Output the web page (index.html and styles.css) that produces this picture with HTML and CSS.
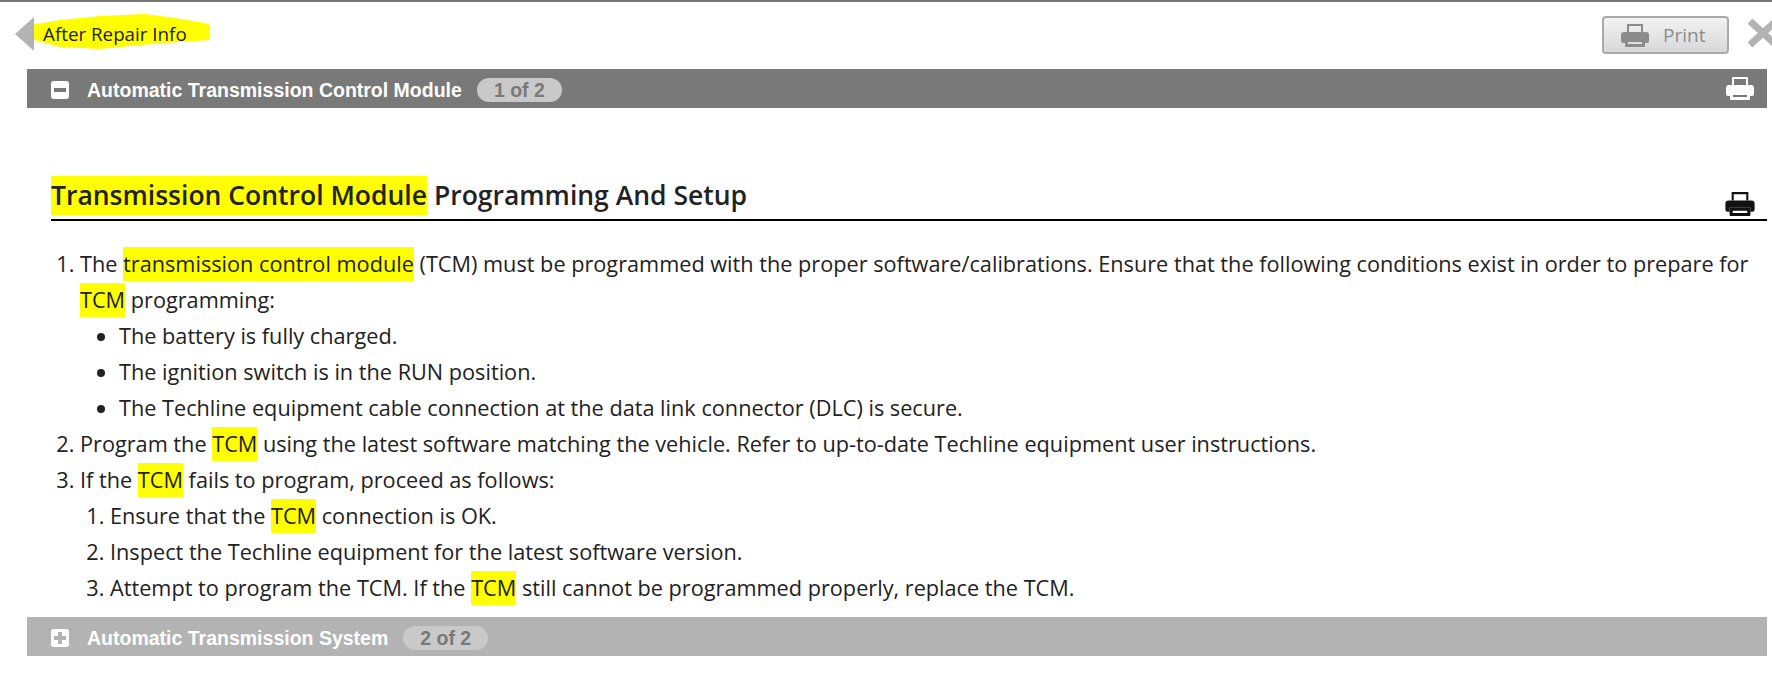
FILE: index.html
```html
<!DOCTYPE html>
<html lang="en">
<head>
  <meta charset="UTF-8">
  <title>After Repair Info</title>
  <link rel="stylesheet" href="styles.css">
</head>
<body>
  <svg width="0" height="0" class="defs">
    <symbol id="printer" viewBox="0 0 28 24">
      <path d="M6 9V1h16v8h-2V3H8v6z"/>
      <path d="M3 9h22a3 3 0 0 1 3 3v6a2 2 0 0 1-2 2h-2v-4H4v4H2a2 2 0 0 1-2-2v-6a3 3 0 0 1 3-3z"/>
      <path d="M4 16h20v7a1 1 0 0 1-1 1H5a1 1 0 0 1-1-1zM7 19v2h14v-2z" fill-rule="evenodd"/>
    </symbol>
  </svg>

  <header class="top-bar">
    <div class="back-link">
      <svg class="scribble" width="180" height="35" viewBox="0 0 180 35">
        <path d="M0 11 L30 6 L70 2 L115 0 L145 4 L175 9 L180 11 L180 26 L150 28 L110 31 L70 35 L30 33 L4 26 Z"/>
      </svg>
      <span class="back-arrow"></span>
      <span class="back-text">After Repair Info</span>
    </div>
    <div class="top-actions">
      <button class="print-btn">
        <svg class="print-icon"><use href="#printer"/></svg>
        Print
      </button>
      <svg class="close-x" width="24" height="32" viewBox="0 0 24 32">
        <path d="M2 4 L28 28 M28 4 L2 28"/>
      </svg>
    </div>
  </header>

  <div class="bar bar-open">
    <span class="toggle"><span class="minus"></span></span>
    <span class="bar-title">Automatic Transmission Control Module</span>
    <span class="pill">1 of 2</span>
    <svg class="bar-print"><use href="#printer"/></svg>
  </div>

  <section class="doc">
    <div class="doc-head">
      <h1><mark>Transmission Control Module</mark> Programming And Setup</h1>
      <svg class="doc-print"><use href="#printer"/></svg>
    </div>

    <ol class="steps">
      <li>The <mark>transmission control module</mark> (TCM) must be programmed with the proper software/calibrations. Ensure that the following conditions exist in order to prepare for <mark>TCM</mark> programming:
        <ul>
          <li>The battery is fully charged.</li>
          <li>The ignition switch is in the RUN position.</li>
          <li>The Techline equipment cable connection at the data link connector (DLC) is secure.</li>
        </ul>
      </li>
      <li>Program the <mark>TCM</mark> using the latest software matching the vehicle. Refer to up-to-date Techline equipment user instructions.</li>
      <li>If the <mark>TCM</mark> fails to program, proceed as follows:
        <ol>
          <li>Ensure that the <mark>TCM</mark> connection is OK.</li>
          <li>Inspect the Techline equipment for the latest software version.</li>
          <li>Attempt to program the TCM. If the <mark>TCM</mark> still cannot be programmed properly, replace the TCM.</li>
        </ol>
      </li>
    </ol>
  </section>

  <div class="bar bar-closed">
    <span class="toggle"><span class="plus"></span></span>
    <span class="bar-title">Automatic Transmission System</span>
    <span class="pill">2 of 2</span>
  </div>
</body>
</html>
```

FILE: styles.css
```css
html, body {
  overflow: hidden;
}

body {
  margin: 0;
  padding: 0;
  height: 692px;
  box-sizing: border-box;
  border-top: 2px solid #777;
  background: #fff;
  color: #222;
  font-family: 'Open Sans', 'Noto Sans', sans-serif;
}

.defs {
  display: block;
  height: 0;
}

.top-bar {
  display: flex;
  justify-content: space-between;
  height: 67px;
  padding-left: 15px;
}

.back-link {
  position: relative;
  display: flex;
  align-items: center;
  height: 34px;
  margin-top: 15px;
}

.scribble {
  position: absolute;
  left: 15px;
  top: -3px;
}

.scribble path {
  fill: #ffff00;
}

.back-arrow {
  position: relative;
  width: 0;
  height: 0;
  border-top: 17px solid transparent;
  border-bottom: 17px solid transparent;
  border-right: 19px solid #b3b3b3;
  margin-right: 9px;
}

.back-text {
  position: relative;
  font-size: 18.8px;
  color: #222;
}

.top-actions {
  display: flex;
  align-items: flex-start;
  gap: 19px;
}

.print-btn {
  display: flex;
  align-items: center;
  gap: 14px;
  width: 127px;
  height: 38px;
  margin-top: 14px;
  padding: 0 0 0 17px;
  border: 2px solid #aaa;
  border-radius: 4px;
  background: linear-gradient(#f2f2f2, #d8d8d8);
  color: #8c8c8c;
  font-family: inherit;
  font-size: 19px;
}

.print-icon {
  width: 28px;
  height: 24px;
  fill: #8c8c8c;
}

.close-x {
  margin-top: 15px;
}

.close-x path {
  fill: none;
  stroke: #b3b3b3;
  stroke-width: 7px;
}

.bar {
  display: flex;
  align-items: center;
  box-sizing: border-box;
  height: 39px;
  margin: 0 5px 0 27px;
  padding: 3px 13px 0 24px;
  color: #fff;
}

.bar-open {
  background: #797979;
}

.bar-closed {
  background: #b3b3b3;
}

.toggle {
  display: flex;
  align-items: center;
  justify-content: center;
  width: 18px;
  height: 18px;
  margin-right: 18px;
  border-radius: 3px;
  background: #fff;
}

.minus {
  width: 12px;
  height: 4px;
  background: #797979;
}

.plus {
  position: relative;
  width: 12px;
  height: 4px;
  background: #b3b3b3;
}

.plus::after {
  content: '';
  position: absolute;
  left: 4px;
  top: -4px;
  width: 4px;
  height: 12px;
  background: #b3b3b3;
}

.bar-title {
  font-family: 'Liberation Sans', Arial, sans-serif;
  font-size: 19.5px;
  font-weight: bold;
  margin-right: 15px;
}

.pill {
  height: 24px;
  line-height: 24px;
  padding: 0 17px;
  border-radius: 12px;
  background: #c9c9c9;
  color: #797979;
  font-family: 'Liberation Sans', Arial, sans-serif;
  font-size: 19.5px;
  font-weight: bold;
}

.bar-print {
  width: 28px;
  height: 24px;
  margin-left: auto;
  margin-bottom: 4px;
  fill: #fff;
}

.doc {
  padding: 66px 5px 0 51px;
  height: 509px;
  box-sizing: border-box;
}

.doc-head {
  display: flex;
  align-items: flex-end;
  justify-content: space-between;
  height: 45px;
  border-bottom: 2px solid #000;
}

h1 {
  margin: 0 0 4px;
  font-size: 26.5px;
  font-weight: 600;
  line-height: 39px;
}

mark {
  background: #ffff00;
  color: inherit;
  padding: 2px 0 3px;
}

h1 mark {
  display: inline-block;
  height: 39px;
  padding: 0;
}

.doc-print {
  width: 30px;
  height: 25px;
  margin: 0 12px 3px 0;
  fill: #111;
}

.steps {
  margin: 25px 0 0;
  padding: 0 10px 0 29px;
  font-size: 21.7px;
  line-height: 36px;
}

.steps ul,
.steps ol {
  margin: 0;
  padding-left: 30px;
}

.steps ul {
  list-style-type: disc;
  padding-left: 39px;
}
```
